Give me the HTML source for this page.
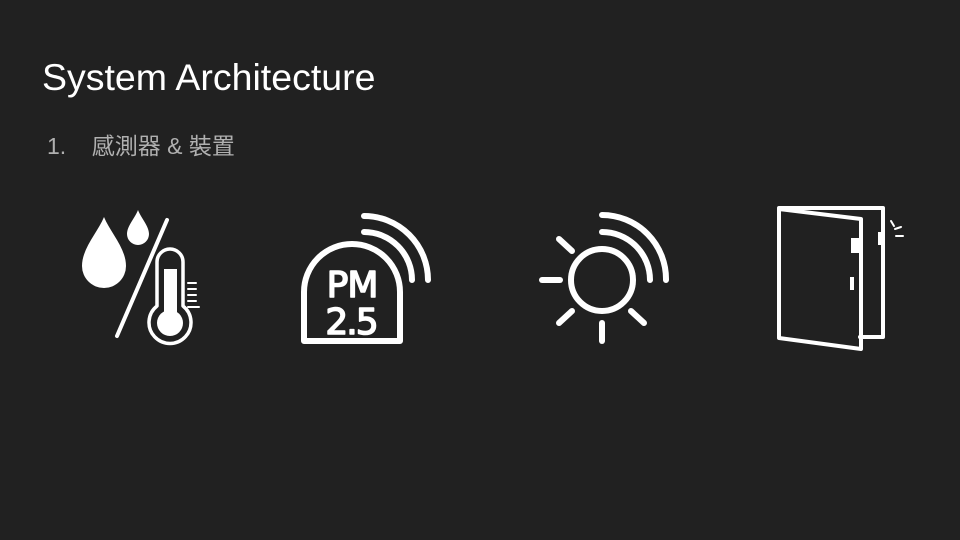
<!DOCTYPE html>
<html><head><meta charset="utf-8"><style>
body{margin:0;width:960px;height:540px;background:#212121;overflow:hidden;position:relative;font-family:"Liberation Sans","Noto Sans CJK TC",sans-serif}
.t{position:absolute;left:42px;top:56px;font-size:37.5px;color:#fff;white-space:nowrap}
.s{position:absolute;left:47px;top:127px;font-size:23px;color:#b0b0b0;white-space:nowrap}
svg{position:absolute;left:0;top:0}
</style></head><body>
<div class="t">System Architecture</div>
<div class="s">1.&nbsp;&nbsp;&nbsp;&nbsp;感測器 &amp; 裝置</div>
<svg width="960" height="540" fill="none" stroke="#fff" stroke-linecap="round" stroke-linejoin="round">
<path d="M104 217 C98 232 82 248 82 266 A22 22 0 0 0 126 266 C126 248 110 232 104 217Z" fill="#fff" stroke="none"/>
<path d="M138 210 C135 218 127 226 127 234 A11 11 0 0 0 149 234 C149 226 141 218 138 210Z" fill="#fff" stroke="none"/>
<line x1="167" y1="220" x2="117" y2="336" stroke-width="4"/>
<path d="M157 306 V262 A11 11 0 0 1 183 262 V306 A21 21 0 1 1 157 306Z" stroke-width="3.5"/>
<rect x="164" y="269" width="13" height="48" fill="#fff" stroke="none"/>
<circle cx="170" cy="323" r="13" fill="#fff" stroke="none"/>
<g stroke-width="2"><line x1="188" y1="283" x2="196" y2="283"/><line x1="188" y1="289" x2="196" y2="289"/><line x1="188" y1="295" x2="196" y2="295"/><line x1="188" y1="301" x2="196" y2="301"/><line x1="188" y1="307" x2="199" y2="307"/></g>
<path d="M304 341 V292 A48 48 0 0 1 400 292 V341 Z" stroke-width="6"/>
<text x="352" y="297" font-family="DejaVu Sans,sans-serif" font-size="36" fill="#fff" stroke="#fff" stroke-width="1.5" text-anchor="middle" letter-spacing="-1">PM</text>
<text x="351" y="334" font-family="DejaVu Sans,sans-serif" font-size="36" fill="#fff" stroke="#fff" stroke-width="1.5" text-anchor="middle" letter-spacing="-2">2.5</text>
<path d="M364 232 A48 48 0 0 1 412 280" stroke-width="6"/>
<path d="M364 216 A64 64 0 0 1 428 280" stroke-width="6"/>
<circle cx="602" cy="280" r="31" stroke-width="6"/>
<g stroke-width="6"><line x1="542" y1="280" x2="560" y2="280"/><line x1="559" y1="239" x2="572" y2="251"/><line x1="559" y1="323" x2="572" y2="311"/><line x1="602" y1="323" x2="602" y2="341"/><line x1="631" y1="311" x2="644" y2="323"/></g>
<path d="M602 232 A48 48 0 0 1 650 280" stroke-width="6"/>
<path d="M602 215 A64 64 0 0 1 666 280" stroke-width="6"/>
<path d="M860 337 H883 V208 H779 V338 L861 349 V219 L779 209" stroke-width="4"/>
<rect x="851" y="238" width="9" height="15" fill="#fff" stroke="none"/>
<rect x="850" y="277" width="4" height="13" fill="#fff" stroke="none"/>
<rect x="878" y="232" width="5" height="13" fill="#fff" stroke="none"/>
<g stroke-width="2"><line x1="891" y1="221" x2="894" y2="226"/><line x1="895" y1="229" x2="901" y2="227"/><line x1="896" y1="236" x2="903" y2="236"/></g>
</svg>
</body></html>
